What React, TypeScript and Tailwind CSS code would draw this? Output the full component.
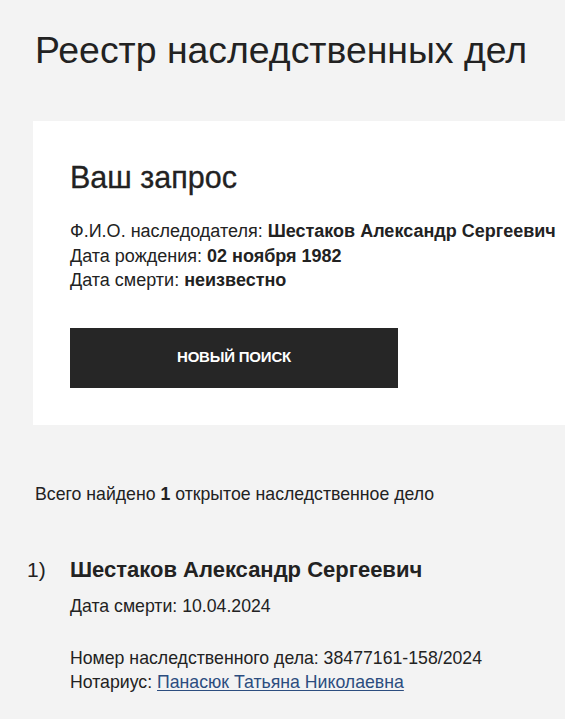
export default function App() {
  return (
    <div className="w-[565px] h-[719px] overflow-hidden bg-[#f3f3f3] text-[#222] font-['Liberation_Sans',Arial,sans-serif]">
      <div className="w-[700px] pl-[33px]">
        {/* Заголовок */}
        <h1 className="pt-[28px] pl-[2px] text-[37.4px] leading-[44px] font-normal">Реестр наследственных дел</h1>

        {/* Карточка запроса */}
        <div className="mt-[49px] bg-white pl-[37px] pt-[38px] h-[304px]">
          <h2 className="text-[30.5px] leading-[36px] font-normal [-webkit-text-stroke:0.3px_#222]">Ваш запрос</h2>
          <div className="mt-[24px] text-[18px] leading-[24.5px] whitespace-nowrap">
            <p>
              Ф.И.О. наследодателя: <b>Шестаков Александр Сергеевич</b>
            </p>
            <p>
              Дата рождения: <b>02 ноября 1982</b>
            </p>
            <p>
              Дата смерти: <b>неизвестно</b>
            </p>
          </div>
          <button className="mt-[35px] w-[328px] h-[60px] bg-[#262626] text-white text-[15px] font-bold uppercase tracking-[-0.2px]">
            Новый поиск
          </button>
        </div>

        {/* Результаты */}
        <p className="mt-[57px] pl-[2px] text-[17.7px] leading-[24px] whitespace-nowrap">
          Всего найдено <b>1</b> открытое наследственное дело
        </p>

        <div className="mt-[50px] flex">
          <span className="w-[43px] -ml-[6px] text-[21px] leading-[28px]">1)</span>
          <div className="whitespace-nowrap">
            <h3 className="text-[22px] leading-[28px] font-bold">Шестаков Александр Сергеевич</h3>
            <p className="mt-[10px] text-[17.7px] leading-[24px]">Дата смерти: 10.04.2024</p>
            <p className="mt-[28px] text-[17.7px] leading-[24px]">Номер наследственного дела: 38477161-158/2024</p>
            <p className="text-[17.7px] leading-[24px]">
              Нотариус:{" "}
              <a href="#" className="text-[#2c4d7f] underline underline-offset-2">
                Панасюк Татьяна Николаевна
              </a>
            </p>
          </div>
        </div>
      </div>
    </div>
  );
}
